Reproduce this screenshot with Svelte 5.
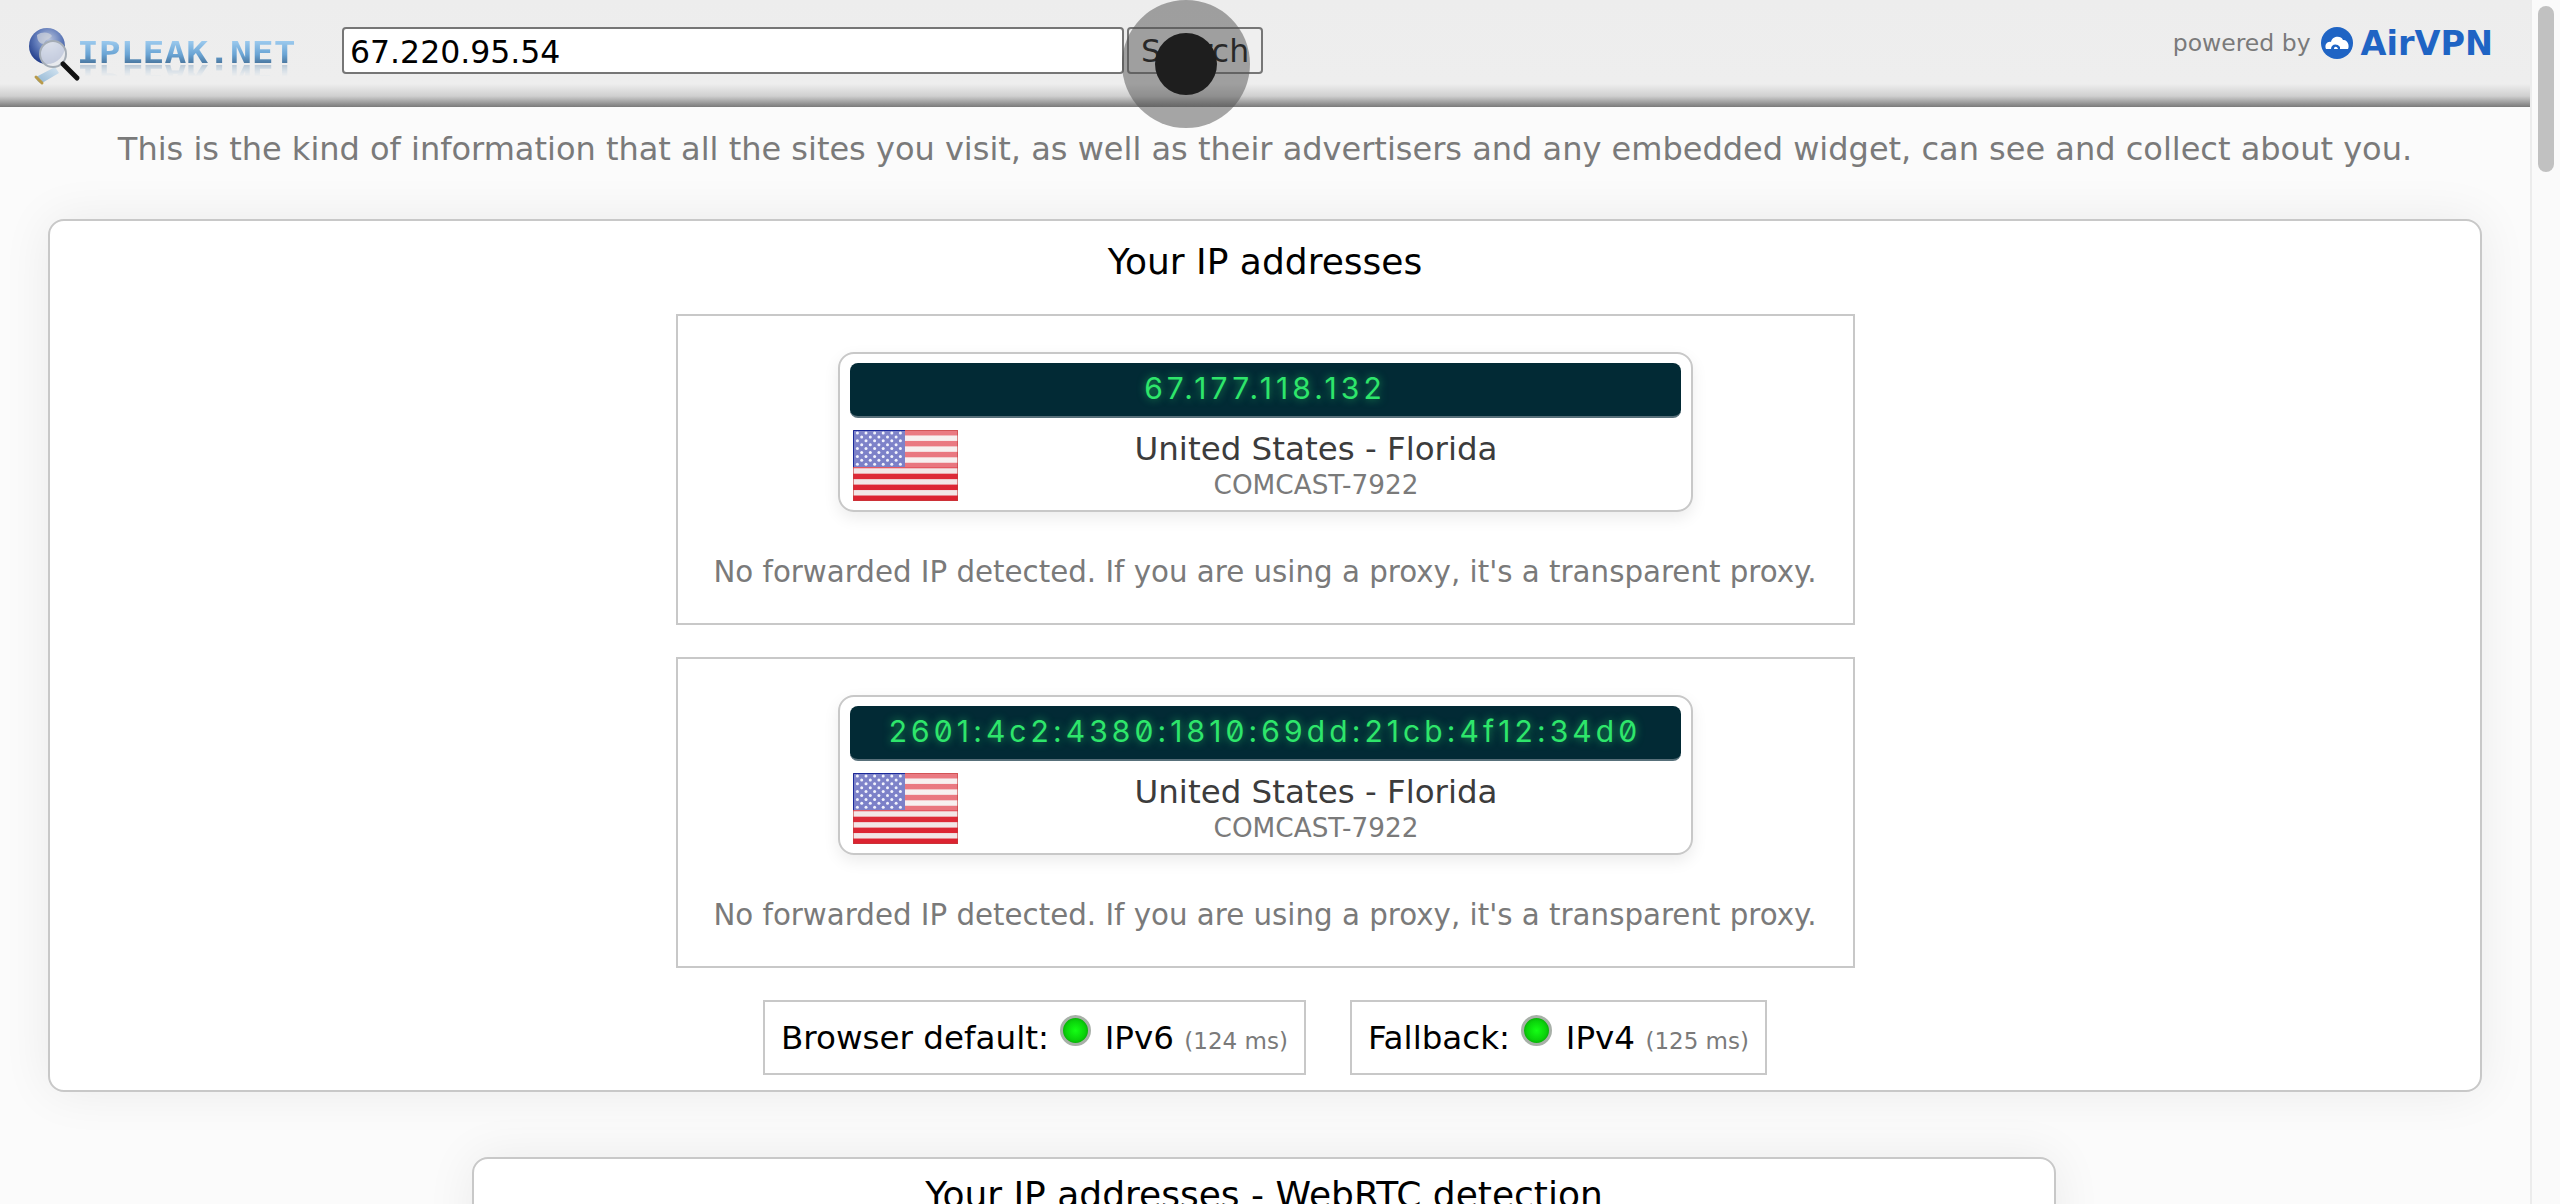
<script>
  const ips = [
    { ip: '67.177.118.132', cls: 'v4' },
    { ip: '2601:4c2:4380:1810:69dd:21cb:4f12:34d0', cls: 'v6' }
  ];
  const stripes = [0, 1, 2, 3, 4, 5, 6];
  const stars = [];
  for (let r = 0; r < 9; r++) {
    for (let c = 0; c < (r % 2 ? 5 : 6); c++) {
      stars.push({ x: (r % 2 ? 8.7 : 4.4) + c * 8.6, y: 3 + r * 3.9 });
    }
  }
</script>

<div class="page">
  <div class="main">
    <header class="top">
      <div class="logo">
        <svg class="glass" viewBox="0 0 56 62" width="56" height="62" aria-hidden="true">
          <defs>
            <radialGradient id="globe" cx="0.55" cy="0.32" r="0.75">
              <stop offset="0" stop-color="#b9c4dc" />
              <stop offset="0.5" stop-color="#5e79b8" />
              <stop offset="1" stop-color="#142f80" />
            </radialGradient>
            <linearGradient id="plug" x1="0" y1="1" x2="1" y2="0">
              <stop offset="0" stop-color="#8fb4d2" />
              <stop offset="1" stop-color="#d6e6f2" />
            </linearGradient>
          </defs>
          <circle cx="19" cy="19" r="18" fill="url(#globe)" />
          <path d="M9 8 C14 4 22 5 24 9 C21 13 17 12 16 17 C12 17 9 14 9 8 Z" fill="#d0d4dc" fill-opacity="0.7" />
          <path d="M8 50 L27 40 L31 46 L14 56 Q9 56 8 50 Z" fill="url(#plug)" />
          <path d="M8 50 L14 56" stroke="#b89a4a" stroke-width="3" stroke-linecap="round" />
          <circle cx="25" cy="27" r="13" fill="#e6e9ee" fill-opacity="0.82" stroke="#a5adb6" stroke-width="2" />
          <path d="M35 37 L49 51" stroke="#111" stroke-width="5" stroke-linecap="round" />
        </svg>
        <span class="word">IPLEAK.NET</span>
      </div>
      <div class="search">
        <input class="field" value="67.220.95.54" />
        <button class="btn">Search</button>
      </div>
      <div class="powered">
        <span>powered by</span>
        <svg viewBox="0 0 32 32" width="32" height="32" aria-hidden="true">
          <circle cx="16" cy="16" r="16" fill="#1f64c4" />
          <path d="M5 22 C3 17 7 14 10 15 C11 9 20 8 22 13 C26 12 29 18 27 22 Z" fill="#fff" />
          <path d="M10 22 C10 17 16 16 19 20 L19 22 Z" fill="#1f64c4" />
          <path d="M13 22 C13 19 16 19 17 22 Z" fill="#fff" />
        </svg>
        <b>AirVPN</b>
      </div>
    </header>

    <p class="lead">This is the kind of information that all the sites you visit, as well as their advertisers and any embedded widget, can see and collect about you.</p>

    <section class="card wide">
      <h2>Your IP addresses</h2>
      {#each ips as item}
        <div class="box">
          <div class="ipcard">
            <div class="display {item.cls}">{item.ip}</div>
            <div class="geo">
              <svg class="flag" viewBox="0 0 105 71" width="105" height="71" preserveAspectRatio="none" aria-hidden="true">
                <defs>
                  <linearGradient id="shine-{item.cls}" x1="0" y1="0" x2="0" y2="1">
                    <stop offset="0" stop-color="#fff" stop-opacity="0.4" />
                    <stop offset="0.52" stop-color="#fff" stop-opacity="0.38" />
                    <stop offset="0.54" stop-color="#fff" stop-opacity="0.05" />
                    <stop offset="1" stop-color="#fff" stop-opacity="0" />
                  </linearGradient>
                </defs>
                <rect width="105" height="71" fill="#f2e6e6" />
                {#each stripes as s}
                  <rect y={s * 10.92} width="105" height="5.46" fill="#dc2230" />
                {/each}
                <rect width="52" height="37" fill="#2a32a6" />
                <rect width="105" height="71" fill="url(#shine-{item.cls})" />
                {#each stars as st}
                  <circle cx={st.x} cy={st.y} r="1.5" fill="#f2f3fc" />
                {/each}
                <rect x="0.5" y="0.5" width="104" height="70" fill="none" stroke="#c23a3a" stroke-opacity="0.6" />
                <path d="M0.5 37 V0.5 H52" fill="none" stroke="#1c2a9a" />
              </svg>
              <div class="where">
                <div class="country">United States - Florida</div>
                <div class="isp">COMCAST-7922</div>
              </div>
            </div>
          </div>
          <p class="note">No forwarded IP detected. If you are using a proxy, it's a transparent proxy.</p>
        </div>
      {/each}
      <div class="status">
        <div class="pill">Browser default: <i class="led"></i> IPv6 <small>(124 ms)</small></div>
        <div class="pill">Fallback: <i class="led"></i> IPv4 <small>(125 ms)</small></div>
      </div>
    </section>

    <section class="card narrow">
      <h2>Your IP addresses - WebRTC detection</h2>
    </section>
  </div>

  <div class="scrollbar"><div class="thumb"></div></div>

  <div class="touch"><div class="dot"></div></div>
</div>

<style>
  :global(body) {
    margin: 0;
    background: #fafafa;
  }
  .page {
    position: relative;
    display: flex;
    height: 1204px;
    overflow: hidden;
    font-family: "DejaVu Sans", Verdana, sans-serif;
  }
  .main {
    flex: 1;
    min-width: 0;
    background: #fbfbfb;
  }
  .top {
    display: flex;
    align-items: flex-start;
    height: 107px;
    padding: 27px 0 0 28px;
    box-sizing: border-box;
    background: linear-gradient(#ededed 0, #eeeeee 84px, #d0d0d0 96px, #7a7a7a 107px);
  }
  .logo {
    width: 314px;
    height: 62px;
    display: flex;
    align-items: flex-start;
    flex: none;
  }
  .glass {
    flex: none;
  }
  .word {
    margin: 11px 0 0 -7px;
    font: 700 30px/30px "DejaVu Sans Mono", monospace;
    white-space: nowrap;
    transform: scaleX(1.21);
    transform-origin: left;
    background: linear-gradient(#9ccaee 10%, #6aa4d4 55%, #456f96 90%);
    -webkit-background-clip: text;
    background-clip: text;
    color: transparent;
    -webkit-box-reflect: below -8px linear-gradient(transparent 45%, rgba(255, 255, 255, 0.45));
  }
  .search {
    display: flex;
    gap: 3px;
  }
  .field {
    width: 782px;
    height: 47px;
    box-sizing: border-box;
    border: 2px solid #767676;
    border-radius: 4px;
    padding: 2px 6px 0;
    font: 31.5px "DejaVu Sans", sans-serif;
    color: #000;
    background: #fff;
    outline: none;
  }
  .btn {
    width: 136px;
    height: 47px;
    box-sizing: border-box;
    border: 2px solid #767676;
    border-radius: 4px;
    background: #efefef;
    font: 31.5px "DejaVu Sans", sans-serif;
    color: #000;
    padding: 0;
  }
  .powered {
    margin: 0 37px 0 auto;
    display: flex;
    align-items: center;
    height: 32px;
    gap: 10px;
    font-size: 23.5px;
    color: #7a7a7a;
  }
  .powered svg {
    margin-right: -2px;
  }
  .powered b {
    font: 700 33.5px "DejaVu Sans", sans-serif;
    color: #1f64c4;
  }
  .lead {
    margin: 22px 0 0;
    height: 90px;
    text-align: center;
    font-size: 32px;
    line-height: 40px;
    color: #7a7a7a;
  }
  .card {
    background: #fff;
    border: 2px solid #c8c8c8;
    border-radius: 16px;
    box-shadow: 0 0 50px rgba(0, 0, 0, 0.07);
    box-sizing: border-box;
  }
  .wide {
    width: 2434px;
    height: 873px;
    margin-left: 48px;
  }
  .narrow {
    width: 1584px;
    height: 200px;
    margin-top: 65px;
    margin-left: 472px;
  }
  .narrow h2 {
    margin-top: 15px;
  }
  h2 {
    margin: 20px 0 0;
    text-align: center;
    font-size: 36px;
    line-height: 42px;
    font-weight: 400;
    color: #000;
  }
  .box {
    width: 1179px;
    height: 311px;
    box-sizing: border-box;
    margin: 31px auto 0;
    border: 2px solid #c8c8c8;
    padding-top: 36px;
  }
  .box + .box {
    margin-top: 32px;
  }
  .ipcard {
    width: 855px;
    height: 160px;
    margin: 0 auto;
    box-sizing: border-box;
    border: 2px solid #c8c8c8;
    border-radius: 16px;
    padding: 9px 10px;
    box-shadow: 0 6px 16px rgba(0, 0, 0, 0.08);
  }
  .display {
    height: 55px;
    box-sizing: border-box;
    background: #022a35;
    border-radius: 8px;
    border-bottom: 2px solid #58707a;
    text-align: center;
    font-family: Inter, sans-serif;
    font-weight: 400;
    font-size: 30px;
    letter-spacing: 4.1px;
    font-feature-settings: "zero";
    line-height: 50px;
    white-space: nowrap;
    color: #2ee66b;
    text-shadow: 0 0 8px rgba(46, 230, 107, 0.6);
  }
  .geo {
    display: flex;
    margin: 12px 0 0 3px;
  }
  .flag {
    flex: none;
  }
  .where {
    flex: 1;
    text-align: center;
    padding-right: 6px;
  }
  .country {
    font-size: 32.5px;
    line-height: 39px;
    color: #3c3c3c;
  }
  .isp {
    font-size: 26.3px;
    line-height: 32px;
    color: #7a7a7a;
  }
  .note {
    margin: 42px 0 0;
    text-align: center;
    font-size: 29.3px;
    line-height: 36px;
    color: #7a7a7a;
  }
  .status {
    display: flex;
    justify-content: center;
    gap: 44px;
    margin-top: 32px;
  }
  .pill {
    height: 75px;
    box-sizing: border-box;
    border: 2px solid #c8c8c8;
    padding: 0 16px;
    font-size: 32.6px;
    line-height: 73px;
    color: #000;
    white-space: nowrap;
  }
  .pill small {
    font-size: 23px;
    color: #7a7a7a;
  }
  .led {
    display: inline-block;
    box-sizing: border-box;
    width: 31px;
    height: 31px;
    margin: 0 3px 0 1px;
    border-radius: 50%;
    vertical-align: 3px;
    border: 3px solid #a8b0a8;
    background: radial-gradient(circle at 50% 50%, #14ff14 0, #0ad20a 55%, #067a06 100%);
  }
  .scrollbar {
    width: 30px;
    flex: none;
    box-sizing: border-box;
    padding: 6px 6px 0 6px;
    background: #fafafa;
    border-left: 2px solid #ececec;
  }
  .thumb {
    height: 166px;
    border-radius: 8px;
    background: #c1c1c1;
  }
  .touch {
    position: absolute;
    left: 1122px;
    top: 0;
    width: 128px;
    height: 128px;
    border-radius: 50%;
    background: rgba(80, 80, 80, 0.5);
    display: flex;
    align-items: center;
    justify-content: center;
  }
  .dot {
    width: 62px;
    height: 62px;
    border-radius: 50%;
    background: #1e1e1e;
  }
</style>
